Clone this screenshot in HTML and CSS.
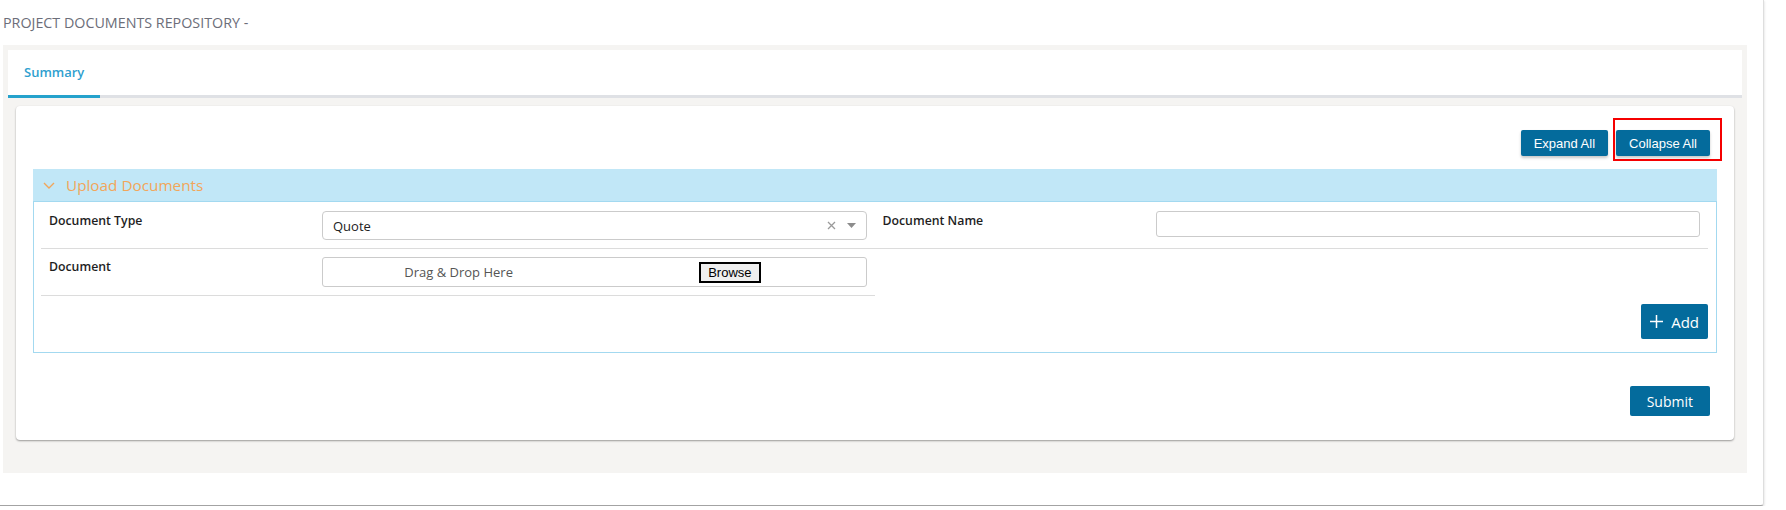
FILE: index.html
```html
<!DOCTYPE html>
<html lang="en">
<head>
<meta charset="utf-8">
<title>Project Documents Repository</title>
<link rel="stylesheet" href="styles.css">
</head>
<body>
<div class="page">
  <h1 class="title">PROJECT DOCUMENTS REPOSITORY -</h1>
  <div class="shell">
    <div class="tabs">
      <div class="tab active">Summary</div>
    </div>
    <div class="card">
      <div class="toolbar">
        <button class="btn btn-sm">Expand All</button>
        <span class="mark-wrap">
          <button class="btn btn-sm">Collapse All</button>
          <span class="mark"></span>
        </span>
      </div>
      <section class="acc">
        <div class="acc-head">
          <svg class="chev" width="12" height="7" viewBox="0 0 12 7"><polyline points="1,1 6,6 11,1" fill="none" stroke="#f2a65a" stroke-width="1.4"/></svg>
          <span class="acc-title">Upload Documents</span>
        </div>
        <div class="acc-body">
          <div class="grid">
            <div class="field">
              <label class="lbl">Document Type</label>
              <div class="select">
                <span class="select-val">Quote</span>
                <svg class="clear" width="9" height="9" viewBox="0 0 9 9"><path d="M1 1 L8 8 M8 1 L1 8" stroke="#9a9a9a" stroke-width="1.3"/></svg>
                <svg class="caret" width="9" height="5" viewBox="0 0 9 5"><path d="M0 0 H9 L4.5 5 Z" fill="#8c8c8c"/></svg>
              </div>
            </div>
            <div class="field">
              <label class="lbl">Document Name</label>
              <input class="input" type="text">
            </div>
            <div class="field">
              <label class="lbl">Document</label>
              <div class="dropzone">
                <span class="dz-text">Drag &amp; Drop Here</span>
                <span class="dz-btn-cell"><button class="browse">Browse</button></span>
              </div>
            </div>
          </div>
          <div class="add-row">
            <button class="btn btn-add">
              <svg width="13" height="13" viewBox="0 0 13 13"><path d="M6.5 0 V13 M0 6.5 H13" stroke="#fff" stroke-width="1.5"/></svg>
              <span>Add</span>
            </button>
          </div>
        </div>
      </section>
      <div class="submit-row">
        <button class="btn btn-submit">Submit</button>
      </div>
    </div>
  </div>
</div>
</body>
</html>
```
FILE: styles.css
```css
* { box-sizing: border-box; }

html, body {
  margin: 0;
  padding: 0;
  background: #ffffff;
}

body {
  font-family: "Open Sans", "Noto Sans", sans-serif;
  color: #222;
}

.page {
  width: 1764px;
  height: 506px;
  padding: 13px 16px 0 3px;
  background: #fff;
  border-right: 1px solid #dedede;
  border-bottom: 1px solid #a3a3a3;
  border-bottom-right-radius: 3px;
  box-shadow: 1px 1px 2px rgba(0, 0, 0, 0.08);
}

.title {
  margin: 0 0 12px 0;
  font-size: 14.3px;
  line-height: 20px;
  font-weight: 400;
  color: #6c6e79;
  letter-spacing: 0;
}

.shell {
  width: 1744px;
  background: #f5f4f2;
  padding: 5px 5px 33px 5px;
}

.tabs {
  display: flex;
  height: 48px;
  background: #fff;
  border-bottom: 3px solid #dfe1e5;
}

.tab {
  height: 48px;
  padding: 0 16px;
  font-size: 13px;
  line-height: 45px;
  font-weight: 600;
  color: #2f9fcf;
}

.tab.active {
  border-bottom: 3px solid #25a2cc;
}

.card {
  margin: 8px 8px 0 8px;
  background: #fff;
  border-radius: 4px;
  box-shadow: 0 1px 2px rgba(0, 0, 0, 0.38);
  padding: 24px 17px;
}

.toolbar {
  display: flex;
  justify-content: flex-end;
  gap: 8px;
  padding-right: 7px;
  margin-bottom: 13px;
}

.btn {
  border: 0;
  background: #046b9c;
  color: #fff;
  border-radius: 2px;
  cursor: pointer;
}

.btn-sm {
  height: 26px;
  padding: 0 13px;
  font-family: "Liberation Sans", Arial, sans-serif;
  font-size: 13px;
  box-shadow: 0 2px 3px rgba(0, 0, 0, 0.22);
}

.mark-wrap {
  position: relative;
  display: inline-flex;
}

.mark {
  position: absolute;
  left: -3px;
  top: -12px;
  right: -12px;
  bottom: -5px;
  border: 2px solid #f50000;
  pointer-events: none;
}

.acc-head {
  display: flex;
  align-items: center;
  height: 32px;
  background: #c1e7f7;
  padding-left: 10px;
}

.chev {
  display: block;
  margin-right: 11px;
}

.acc-title {
  font-size: 15.3px;
  line-height: 32px;
  color: #f2a65a;
}

.acc-body {
  border: 1px solid #a3d9f0;
  padding: 1px 8px 0 7px;
}

.grid {
  display: grid;
  grid-template-columns: 1fr 1fr;
}

.field {
  display: flex;
  align-items: flex-start;
  padding: 8px 8px 8px 8px;
  border-bottom: 1px solid #dcdcdc;
}

.lbl {
  flex: 0 0 273px;
  font-size: 12.3px;
  line-height: 20px;
  font-weight: 600;
  color: #1e1e1e;
}

.select {
  flex: 1;
  height: 29px;
  border: 1px solid #cbcbcb;
  border-radius: 4px;
  display: flex;
  align-items: center;
  padding: 0 10px;
}

.select-val {
  flex: 1;
  font-size: 13px;
  color: #222;
}

.clear {
  display: block;
  margin-right: 11px;
}

.caret {
  display: block;
}

.input {
  flex: 1;
  height: 26px;
  border: 1px solid #cbcbcb;
  border-radius: 3px;
  font: inherit;
  padding: 0 8px;
  outline: none;
}

.dropzone {
  flex: 1;
  height: 30px;
  border: 1px solid #cbcbcb;
  border-radius: 3px;
  display: grid;
  grid-template-columns: 1fr 1fr;
  align-items: center;
}

.dz-text {
  text-align: center;
  font-size: 13px;
  color: #555;
}

.dz-btn-cell {
  display: flex;
  justify-content: center;
}

.browse {
  height: 21px;
  padding: 0 7px;
  border: 2px solid #000;
  background: #efefef;
  font-family: "Liberation Sans", Arial, sans-serif;
  font-size: 13px;
  color: #000;
  line-height: 17px;
  border-radius: 0;
}

.add-row {
  display: flex;
  justify-content: flex-end;
  margin: 8px 0 13px 0;
}

.btn-add {
  height: 35px;
  display: inline-flex;
  align-items: center;
  gap: 8px;
  padding: 0 9px;
  font-family: "Open Sans", sans-serif;
  font-size: 15px;
  border-radius: 2px;
}

.btn-add svg {
  display: block;
}

.submit-row {
  display: flex;
  justify-content: flex-end;
  padding-right: 7px;
  margin-top: 33px;
}

.btn-submit {
  height: 30px;
  padding: 0 17px;
  font-family: "Open Sans", sans-serif;
  font-size: 14px;
}
```
